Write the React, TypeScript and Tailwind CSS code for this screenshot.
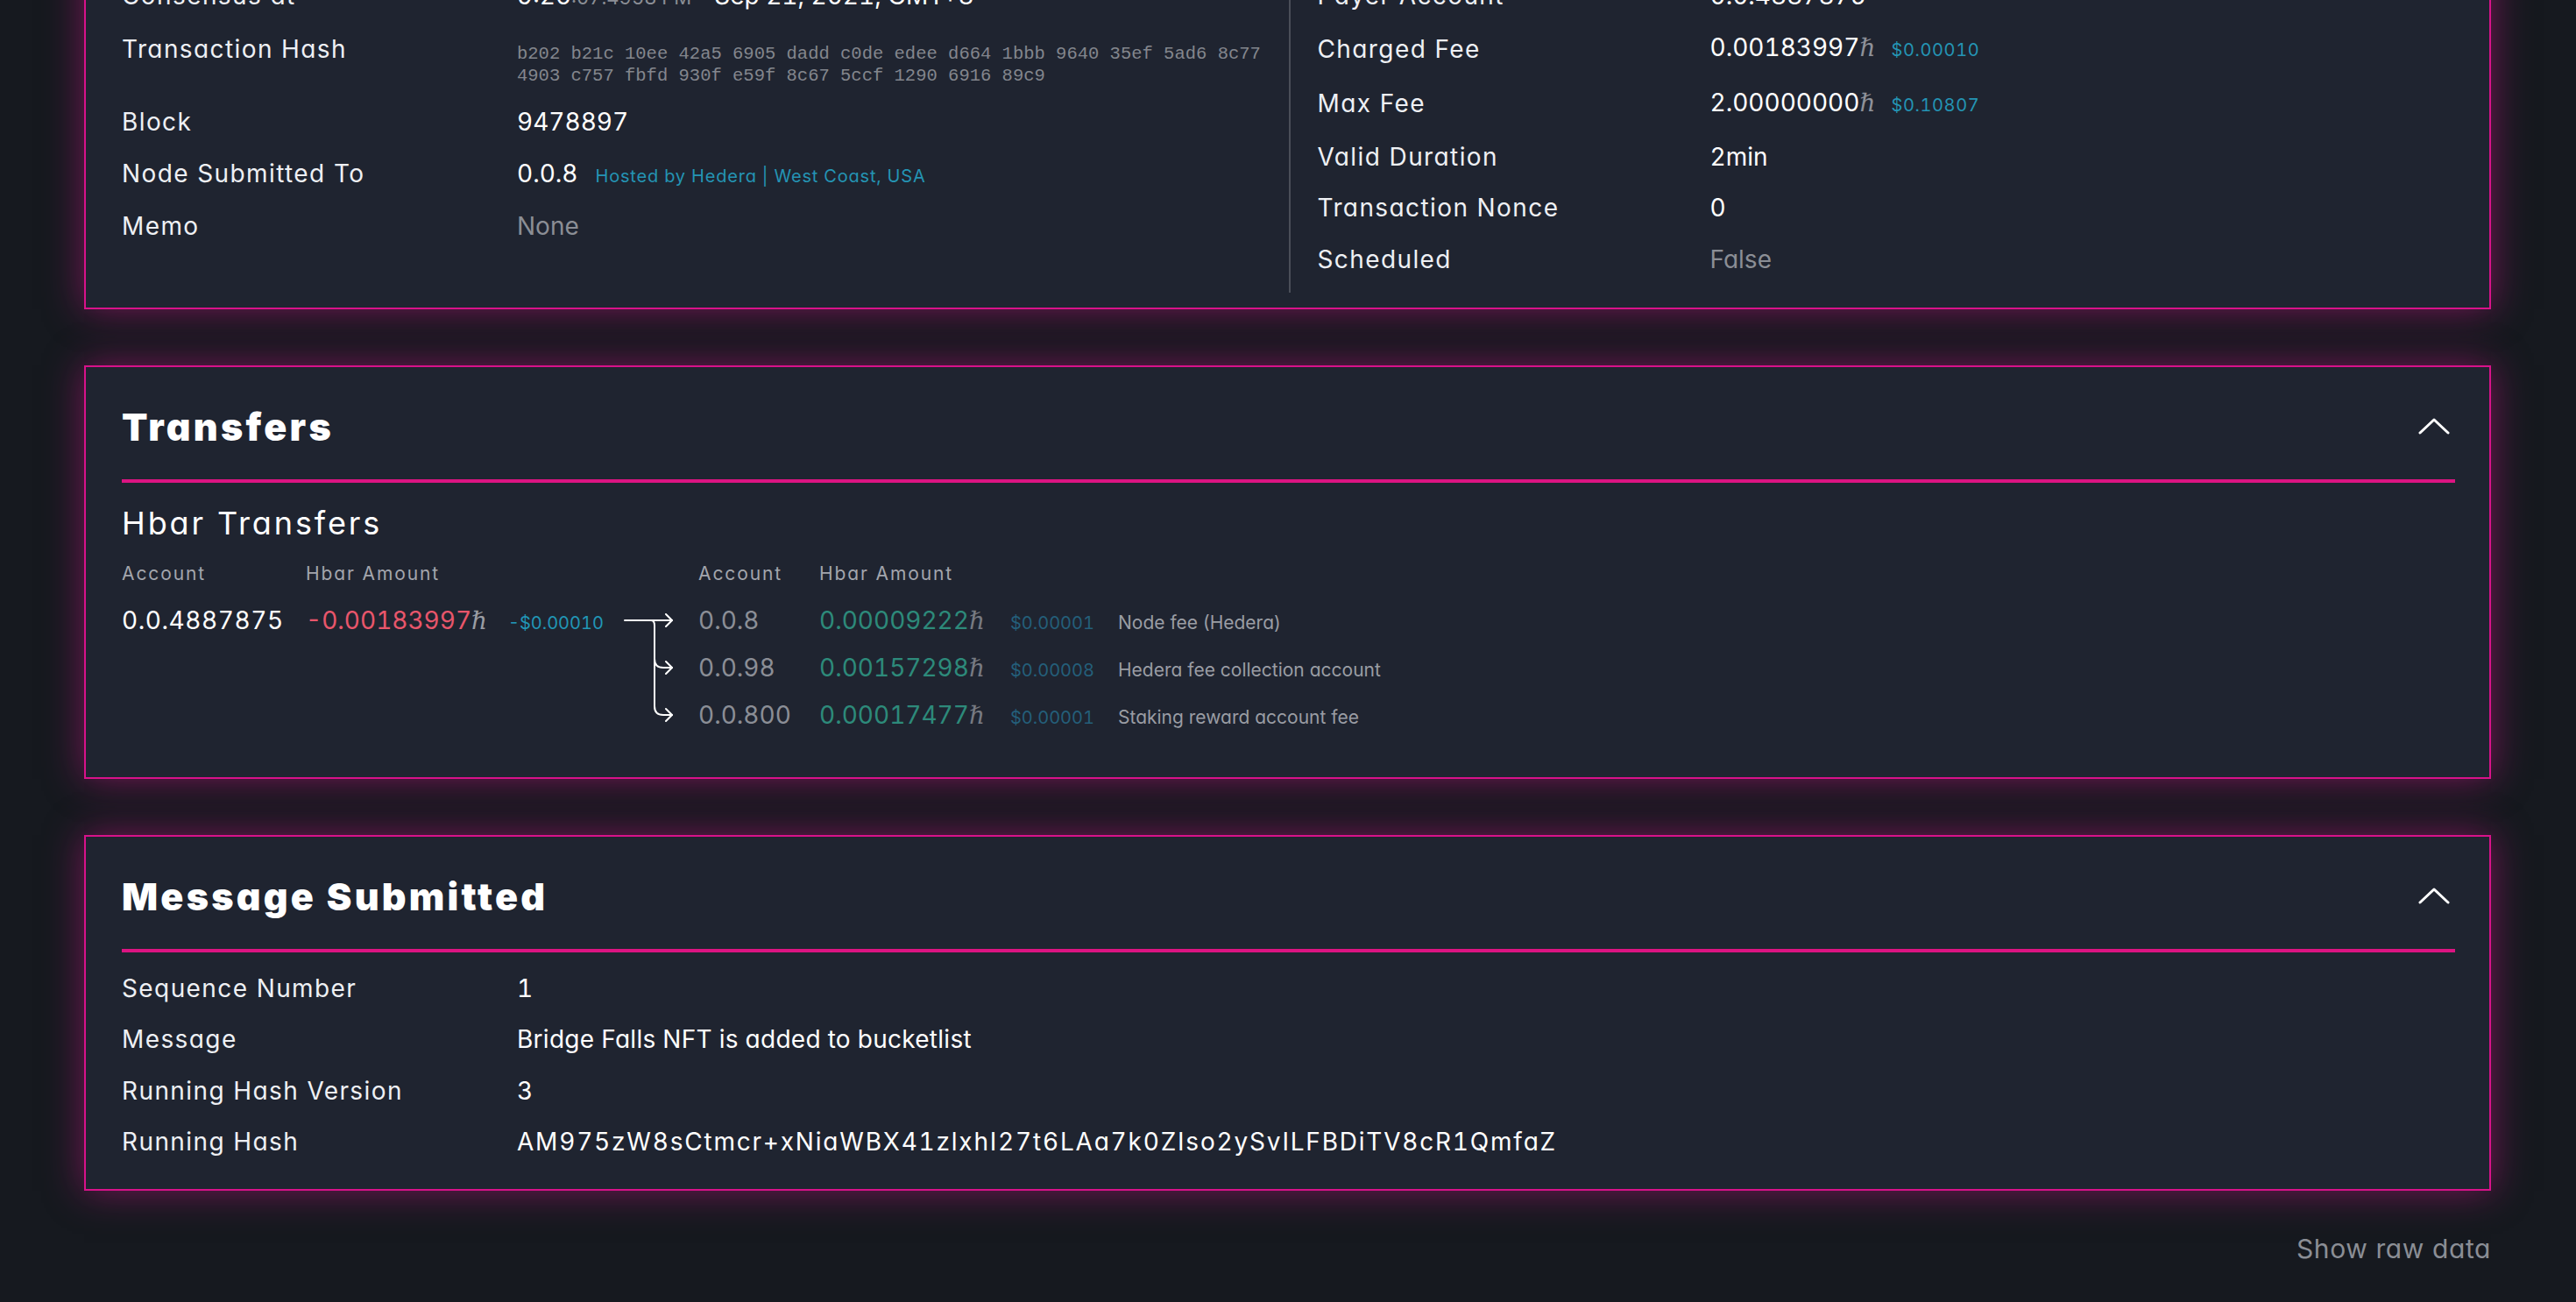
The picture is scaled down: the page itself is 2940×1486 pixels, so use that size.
import React from "react";

type P = { children?: React.ReactNode; className?: string };

const Hb = ({ className = "" }: { className?: string }) => (
  <span className={"[font-family:'DejaVu_Serif',serif] italic tracking-normal " + className}>ℏ</span>
);

function Row({ label, children, className = "", valueClass = "" }: { label: string; children?: React.ReactNode; className?: string; valueClass?: string }) {
  return (
    <div className={"flex items-start " + className}>
      <div className="w-[451px] shrink-0 text-[28px] leading-[36px] tracking-[0.05em] text-[#eef0f4]">{label}</div>
      <div className={"min-w-0 flex-1 text-[28px] leading-[36px] tabular-nums text-white " + valueClass}>{children}</div>
    </div>
  );
}

function RRow({ label, children, className = "" }: { label: string; children?: React.ReactNode; className?: string }) {
  return (
    <div className={"flex items-center " + className}>
      <div className="w-[448px] shrink-0 text-[28px] leading-[36px] tracking-[0.05em] text-[#eef0f4]">{label}</div>
      <div className="min-w-0 flex-1 text-[28px] leading-[36px] tabular-nums text-white">{children}</div>
    </div>
  );
}

function Panel({ children, className = "" }: P) {
  return (
    <section
      className={
        "border-2 border-[#d8128a] bg-[#1f2430] shadow-[0_0_40px_rgba(214,18,140,0.5)] " + className
      }
    >
      {children}
    </section>
  );
}

function SectionHeader({ title }: { title: string }) {
  return (
    <>
      <div className="flex items-center justify-between">
        <h2 className="text-[43px] leading-[52px] font-black tracking-[0.075em] text-white">{title}</h2>
        <svg width="36" height="20" viewBox="0 0 36 20" className="mr-[6px]" fill="none">
          <path d="M2 17 L18 2 L34 17" stroke="#ffffff" strokeWidth="3" strokeLinecap="round" strokeLinejoin="round" />
        </svg>
      </div>
      <div className="mt-[34px] h-[4px] bg-[#dc1482]" />
    </>
  );
}

function FlowArrows() {
  return (
    <svg width="58" height="130" viewBox="0 0 58 130" fill="none" className="shrink-0">
      <g stroke="#ffffff" strokeWidth="2" strokeLinecap="round" strokeLinejoin="round">
        <path d="M1 8 H55" />
        <path d="M48 1 L55 8 L48 15" />
        <path d="M31 8 Q35 8 35 14 V106 Q35 116 45 116 H55" />
        <path d="M48 109 L55 116 L48 123" />
        <path d="M35 52 Q35 62 45 62 H55" />
        <path d="M48 55 L55 62 L48 69" />
      </g>
    </svg>
  );
}

export default function App() {
  const feeRows = [
    { acct: "0.0.8", amt: "0.00009222", usd: "$0.00001", desc: "Node fee (Hedera)" },
    { acct: "0.0.98", amt: "0.00157298", usd: "$0.00008", desc: "Hedera fee collection account" },
    { acct: "0.0.800", amt: "0.00017477", usd: "$0.00001", desc: "Staking reward account fee" },
  ];

  return (
    <div className="flex min-h-screen flex-col overflow-hidden bg-[#16191f] pl-[96px] pr-[97px] pb-[60px] [font-family:Inter,'Noto_Sans',sans-serif] [font-feature-settings:'cv11'] text-white">
      <div className="-mt-[65px] flex flex-col gap-[64px]">
        {/* Transaction details panel (scrolled) */}
        <Panel className="pl-[41px] pr-[39px] pt-[40px] pb-[17px]">
          <div className="grid grid-cols-2">
            <div className="flex flex-col gap-[22.5px]">
              <Row label="Consensus at">
                <span>9:26</span>
                <span className="text-[22px] text-[#8b8e95]">:07.4958 PM</span>
                <span className="ml-[26px]">Sep 21, 2021, GMT+8</span>
              </Row>
              <div className="flex items-start">
                <div className="w-[451px] shrink-0 text-[28px] leading-[36px] tracking-[0.05em] text-[#eef0f4]">Transaction Hash</div>
                <div className="mt-[11px] [font-family:'Liberation_Mono',monospace] text-[20.5px] leading-[25px] text-[#83868d]">
                  <div>b202 b21c 10ee 42a5 6905 dadd c0de edee d664 1bbb 9640 35ef 5ad6 8c77</div>
                  <div>4903 c757 fbfd 930f e59f 8c67 5ccf 1290 6916 89c9</div>
                </div>
              </div>
              <Row label="Block">9478897</Row>
              <Row label="Node Submitted To" className="h-[38px]">
                <span>0.0.8</span>
                <span className="ml-[20px] text-[20px] tracking-[0.04em] text-[#2494b4]">Hosted by Hedera | West Coast, USA</span>
              </Row>
              <Row label="Memo">
                <span className="text-[#8b8e95]">None</span>
              </Row>
            </div>
            <div className="flex flex-col gap-[22.5px] border-l-2 border-[#4a4e58] pl-[31px] pb-[20px]">
              <RRow label="Payer Account">0.0.4887875</RRow>
              <RRow label="Charged Fee" className="h-[40px]">
                <span>0.00183997</span>
                <Hb className="text-[#8e9199]" />
                <span className="ml-[18px] text-[20px] tracking-[0.03em] text-[#2494b4]">$0.00010</span>
              </RRow>
              <RRow label="Max Fee" className="h-[40px]">
                <span>2.00000000</span>
                <Hb className="text-[#8e9199]" />
                <span className="ml-[18px] text-[20px] tracking-[0.03em] text-[#2494b4]">$0.10807</span>
              </RRow>
              <RRow label="Valid Duration">2min</RRow>
              <RRow label="Transaction Nonce">0</RRow>
              <RRow label="Scheduled">
                <span className="text-[#8b8e95]">False</span>
              </RRow>
            </div>
          </div>
        </Panel>

        {/* Transfers */}
        <Panel className="pl-[41px] pr-[39px] pt-[42px] pb-[53px]">
          <SectionHeader title="Transfers" />
          <div className="mt-[25px] text-[36px] leading-[42px] tracking-[0.08em] text-white">Hbar Transfers</div>
          <div className="mt-[23px] flex items-start">
            <div className="w-[573px] shrink-0">
              <div className="flex text-[21px] leading-[28px] tracking-[0.09em] text-[#a3a6ad]">
                <div className="w-[210px]">Account</div>
                <div>Hbar Amount</div>
              </div>
              <div className="mt-[21px] flex h-[36px] items-baseline leading-[36px]">
                <div className="w-[210px] text-[28px] tabular-nums tracking-[0.02em] text-white">0.0.4887875</div>
                <div className="w-[231px] text-[28px] tabular-nums text-[#e8566b]">
                  -0.00183997<Hb className="text-[#9a9da4]" />
                </div>
                <div className="text-[20px] tabular-nums text-[#2196b6]">-$0.00010</div>
              </div>
            </div>
            <div className="mt-[59px]">
              <FlowArrows />
            </div>
            <div className="ml-[27px]">
              <div className="flex text-[21px] leading-[28px] tracking-[0.09em] text-[#a3a6ad]">
                <div className="w-[138px]">Account</div>
                <div>Hbar Amount</div>
              </div>
              <div className="mt-[21px] flex flex-col gap-[18px]">
                {feeRows.map((r) => (
                  <div key={r.acct} className="flex h-[36px] items-baseline leading-[36px]">
                    <div className="w-[138px] text-[28px] tabular-nums text-[#8b8e96]">{r.acct}</div>
                    <div className="w-[218px] text-[28px] tabular-nums text-[#2d8a7a]">
                      {r.amt}
                      <Hb className="text-[#777a82]" />
                    </div>
                    <div className="w-[123px] text-[20px] tabular-nums text-[#245f7a]">{r.usd}</div>
                    <div className="text-[21px] text-[#9a9da4]">{r.desc}</div>
                  </div>
                ))}
              </div>
            </div>
          </div>
        </Panel>

        {/* Message Submitted */}
        <Panel className="pl-[41px] pr-[39px] pt-[42px] pb-[36px]">
          <SectionHeader title="Message Submitted" />
          <div className="mt-[23px] flex flex-col gap-[22.5px]">
            <Row label="Sequence Number">1</Row>
            <Row label="Message" valueClass="tracking-[0.01em]">Bridge Falls NFT is added to bucketlist</Row>
            <Row label="Running Hash Version">3</Row>
            <Row label="Running Hash" valueClass="tracking-[0.064em]">AM975zW8sCtmcr+xNiaWBX41zlxhI27t6LAa7k0ZIso2ySvILFBDiTV8cR1QmfaZ</Row>
          </div>
        </Panel>
      </div>

      <div className="mt-[48px] self-end text-[30px] leading-[36px] tracking-[0.02em] text-[#8b8e95]">
        Show raw data
      </div>
    </div>
  );
}
